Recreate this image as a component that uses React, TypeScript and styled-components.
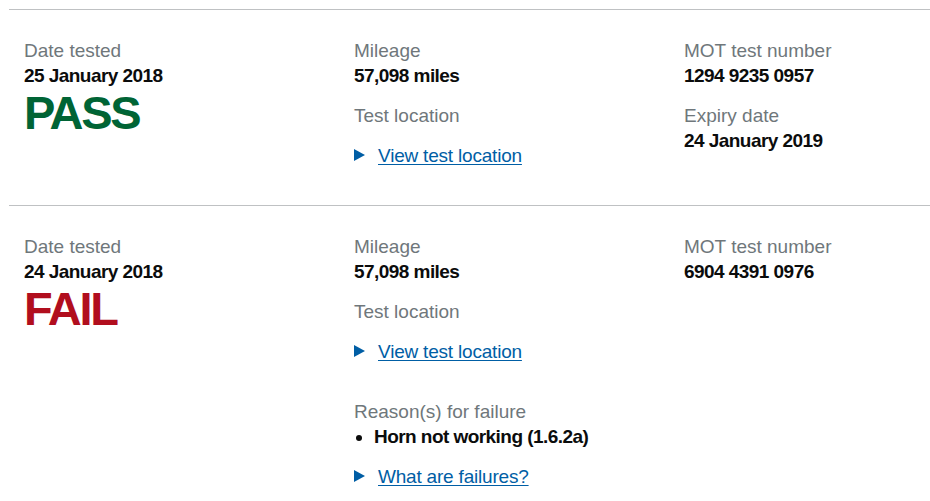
import React from "react";
import styled, { createGlobalStyle } from "styled-components";

const Global = createGlobalStyle`
  html, body { margin: 0; padding: 0; background: #fff; }
  body { font-family: "Liberation Sans", Arial, sans-serif; color: #0b0c0c; overflow: hidden; }
`;

const Page = styled.div`
  padding: 9px 0 0 9px;
  width: 990px;
`;

const Record = styled.section`
  border-top: 1px solid #bfc1c3;
  padding: 28px 0 2px;
  display: grid;
  grid-template-columns: 330px 330px 330px;
`;

const Column = styled.div`
  padding-left: 15px;
  display: flex;
  flex-direction: column;
  align-items: flex-start;
`;

const Label = styled.div`
  font-size: 19px;
  line-height: 25px;
  color: #6f777b;
`;

const Value = styled.div<{ $last?: boolean }>`
  font-size: 19px;
  line-height: 25px;
  font-weight: 700;
  letter-spacing: -0.55px;
  color: #0b0c0c;
  margin-bottom: ${(p) => (p.$last ? "0" : "15px")};
`;

const Spacer = styled.div`
  height: 15px;
`;

const Result = styled.div<{ $pass: boolean }>`
  font-size: 47px;
  line-height: 50px;
  font-weight: 700;
  letter-spacing: -2.3px;
  color: ${(p) => (p.$pass ? "#006435" : "#b10e1e")};
`;

const Toggle = styled.div`
  display: flex;
  align-items: center;
  gap: 14px;
  margin-bottom: 35px;
  font-size: 19px;
  line-height: 25px;
`;

const Arrow = styled.span`
  width: 0;
  height: 0;
  border-left: 11px solid #005ea5;
  border-top: 6px solid transparent;
  border-bottom: 6px solid transparent;
  margin-top: -1px;
  margin-right: -1px;
`;

const Link = styled.a`
  color: #005ea5;
  text-decoration: underline;
  text-underline-offset: 2px;
  text-decoration-thickness: 1px;
  letter-spacing: -0.2px;
  cursor: pointer;
`;

const Reasons = styled.ul`
  margin: 0 0 15px;
  padding-left: 20px;
  font-size: 19px;
  line-height: 25px;
  font-weight: 700;
  letter-spacing: -0.55px;
`;

type Test = {
  date: string;
  pass: boolean;
  mileage: string;
  number: string;
  expiry?: string;
  reasons?: string[];
};

const tests: Test[] = [
  {
    date: "25 January 2018",
    pass: true,
    mileage: "57,098 miles",
    number: "1294 9235 0957",
    expiry: "24 January 2019",
  },
  {
    date: "24 January 2018",
    pass: false,
    mileage: "57,098 miles",
    number: "6904 4391 0976",
    reasons: ["Horn not working (1.6.2a)"],
  },
];

export default function App() {
  return (
    <>
      <Global />
      <Page>
        {tests.map((t) => (
          <Record key={t.number}>
            <Column>
              <Label>Date tested</Label>
              <Value $last>{t.date}</Value>
              <Result $pass={t.pass}>{t.pass ? "PASS" : "FAIL"}</Result>
            </Column>
            <Column>
              <Label>Mileage</Label>
              <Value>{t.mileage}</Value>
              <Label>Test location</Label>
              <Spacer />
              <Toggle>
                <Arrow />
                <Link>View test location</Link>
              </Toggle>
              {t.reasons && (
                <>
                  <Label>Reason(s) for failure</Label>
                  <Reasons>
                    {t.reasons.map((r) => (
                      <li key={r}>{r}</li>
                    ))}
                  </Reasons>
                  <Toggle>
                    <Arrow />
                    <Link>What are failures?</Link>
                  </Toggle>
                </>
              )}
            </Column>
            <Column>
              <Label>MOT test number</Label>
              <Value>{t.number}</Value>
              {t.expiry && (
                <>
                  <Label>Expiry date</Label>
                  <Value>{t.expiry}</Value>
                </>
              )}
            </Column>
          </Record>
        ))}
      </Page>
    </>
  );
}
